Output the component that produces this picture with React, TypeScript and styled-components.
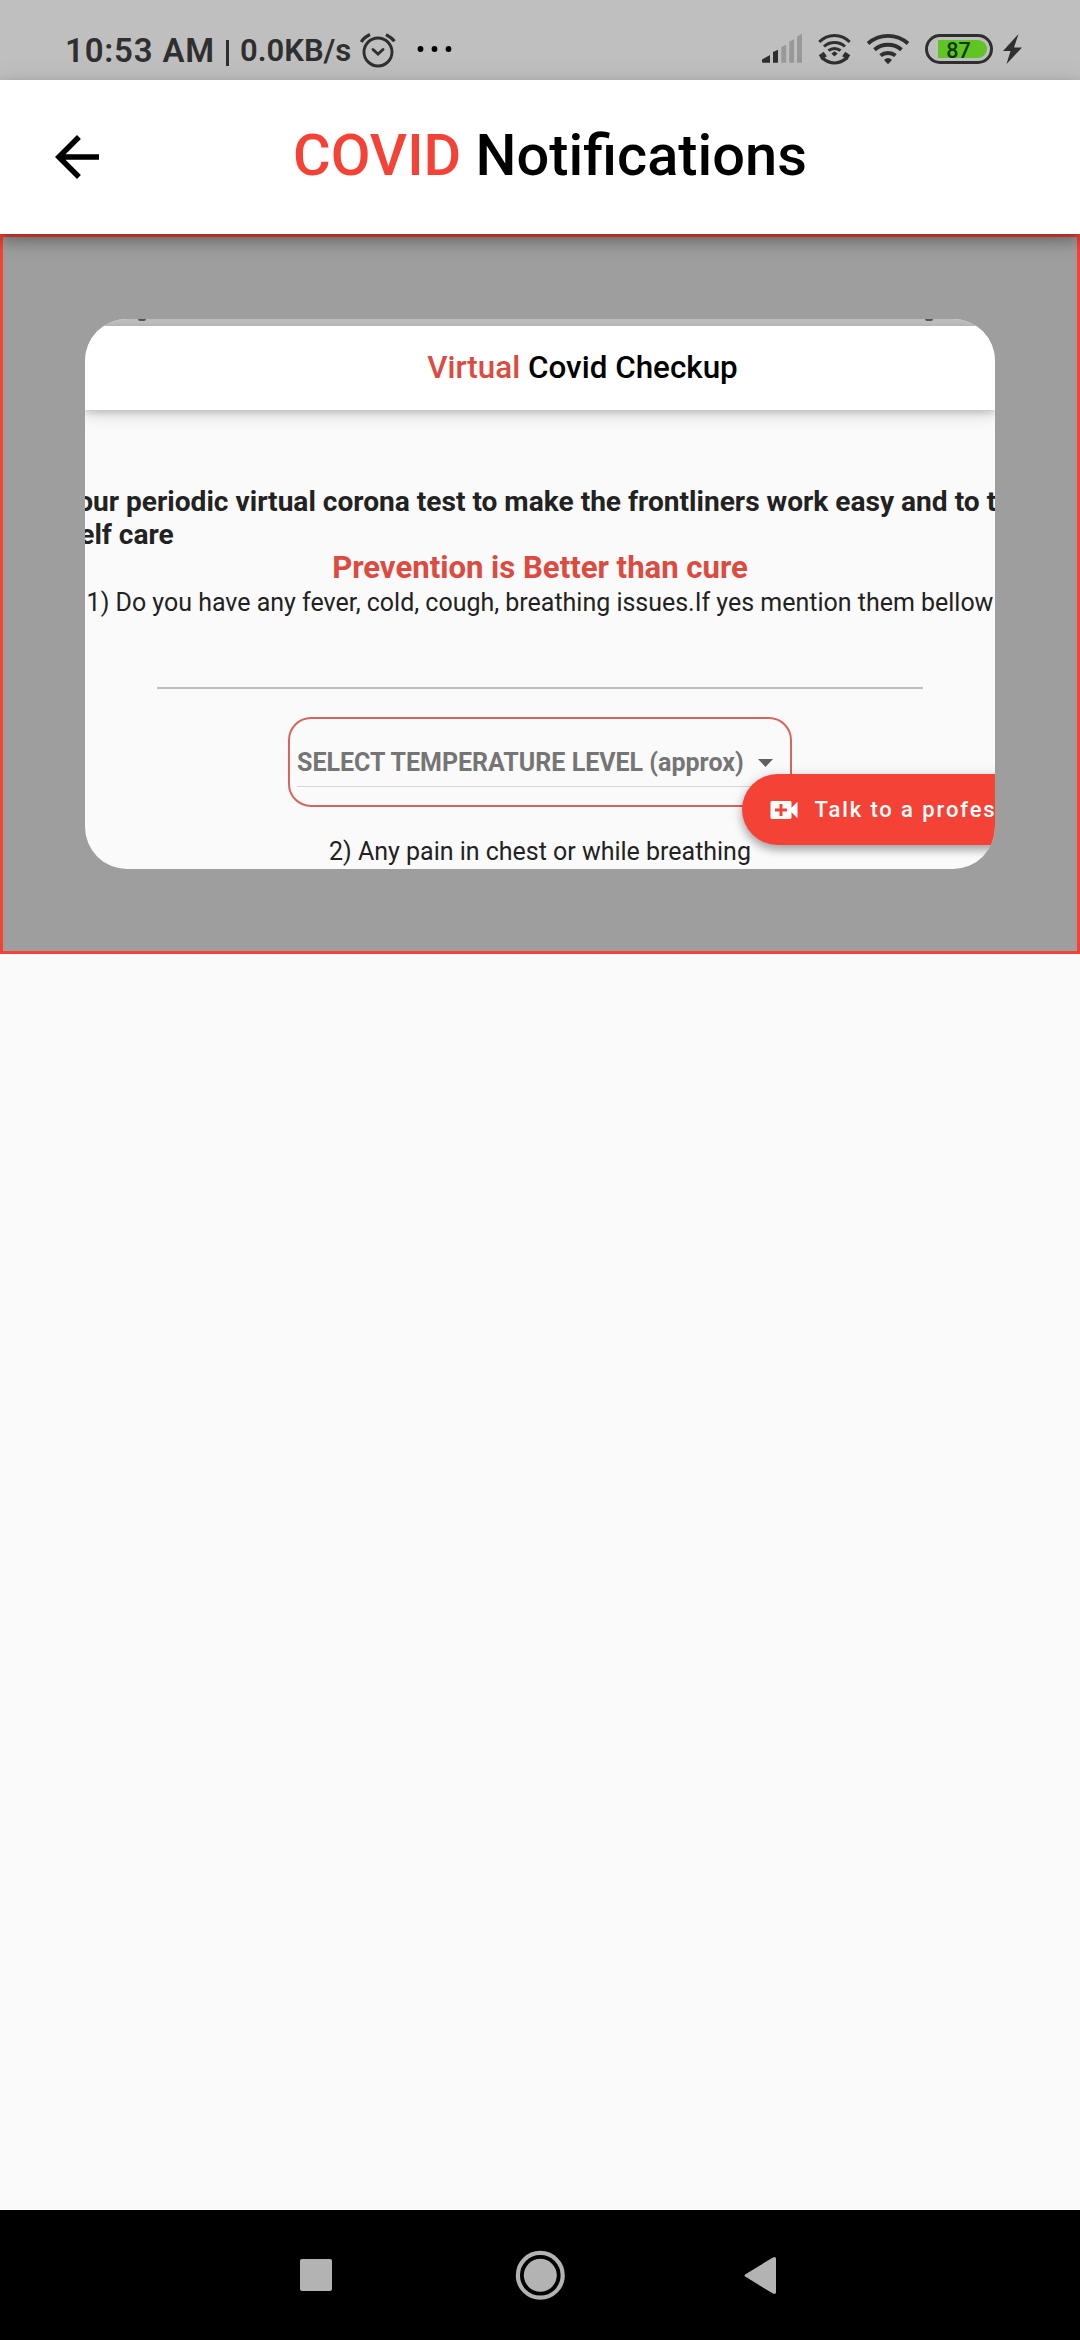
import React from "react";
import styled, { createGlobalStyle } from "styled-components";

const Global = createGlobalStyle`
  * { box-sizing: border-box; }
  html, body { margin: 0; padding: 0; background: #fafafa; }
  body { font-family: Roboto, "Noto Sans", sans-serif; }
`;

const Screen = styled.div`
  width: 1080px;
  height: 2340px;
  display: flex;
  flex-direction: column;
  background: #fafafa;
  overflow: hidden;
`;

const StatusBar = styled.header`
  flex: none;
  height: 80px;
  display: flex;
  align-items: flex-start;
  justify-content: space-between;
  padding: 26px 56px 0 65px;
  background: #bfbfbf;
  color: #2f2f2f;
`;

const StatusGroup = styled.div`
  display: flex;
  height: 46px;
  white-space: nowrap;
`;

const Clock = styled.span`
  width: 161px;
  font-size: 33px;
  line-height: 46px;
  font-weight: 600;
  letter-spacing: 0.8px;
  padding-top: 2px;
`;

const Divider = styled.span`
  width: 3px;
  height: 26px;
  margin: 14px 11px 0 0;
  background: #2f2f2f;
`;

const NetSpeed = styled.span`
  width: 118px;
  font-size: 31px;
  line-height: 46px;
  font-weight: 600;
  padding-top: 2px;
`;

const AppBar = styled.div`
  flex: none;
  position: relative;
  z-index: 1;
  height: 154px;
  display: flex;
  align-items: center;
  padding-left: 44px;
  background: #fff;
  box-shadow: 0 5px 11px rgba(0, 0, 0, 0.2), 0 11px 14px rgba(0, 0, 0, 0.1), 0 3px 27px rgba(0, 0, 0, 0.12);
`;

const Title = styled.h1`
  margin: -5px 0 0 183px;
  font-size: 57.75px;
  line-height: 70px;
  font-weight: 500;
  color: #000;
  white-space: nowrap;
`;

const Accent = styled.span`
  color: #f44336;
`;

const Notice = styled.section`
  flex: none;
  height: 720px;
  border: 3px solid #f44336;
  background: #9e9e9e;
  padding: 82px;
`;

const Card = styled.article`
  position: relative;
  height: 550px;
  border-radius: 42px;
  overflow: hidden;
  background: #fafafa;
  color: #222;
  display: flex;
  flex-direction: column;
  align-items: center;
  white-space: nowrap;
`;

const CardStrip = styled.div`
  flex: none;
  align-self: stretch;
  height: 7px;
  display: flex;
  justify-content: space-between;
  padding: 0 62px 0 53px;
  background: #bfbfbf;
`;

const StripMark = styled.i`
  width: 8px;
  height: 2px;
  border-radius: 0 0 4px 4px;
  background: #555;
`;

const CardHeader = styled.div`
  flex: none;
  align-self: stretch;
  height: 84px;
  text-align: center;
  font-size: 31.4px;
  line-height: 83px;
  font-weight: 500;
  color: #000;
  background: #fff;
  padding-left: 85px;
  box-shadow: 0 3px 6px rgba(0, 0, 0, 0.14), 0 5px 16px rgba(0, 0, 0, 0.14);
`;

const CardAccent = styled.span`
  color: #dc4b40;
`;

const Lead = styled.p`
  align-self: flex-start;
  margin: 75px 0 0 -175.5px;
  font-size: 28.1px;
  line-height: 33.2px;
  font-weight: 700;
`;

const LeadTail = styled.span`
  display: block;
  padding-left: 19px;
`;

const Slogan = styled.p`
  margin: -1px 0 1px;
  font-size: 31.1px;
  line-height: 35px;
  font-weight: 700;
  color: #dc4b40;
`;

const Question = styled.p`
  margin: 1px 0 0;
  font-size: 24.97px;
  line-height: 32px;
`;

const AnswerLine = styled.div`
  flex: none;
  width: 766px;
  height: 2px;
  margin-top: 68px;
  background: #bdbdbd;
`;

const SelectBox = styled.div`
  flex: none;
  width: 504px;
  height: 90px;
  margin: 28px 0 28px;
  padding: 28px 12px 0 7px;
  border: 2px solid #d5655d;
  border-radius: 23px;
`;

const SelectValue = styled.div`
  height: 40px;
  display: flex;
  align-items: center;
  justify-content: space-between;
  padding: 0 5px 8px 0;
  border-bottom: 1px solid #d6d6d6;
  font-size: 25px;
  line-height: 32px;
  font-weight: 700;
  color: #757575;
`;

const CallButton = styled.button`
  position: absolute;
  left: 657px;
  top: 455px;
  width: 360px;
  height: 71px;
  display: flex;
  align-items: center;
  gap: 12.5px;
  padding: 0 0 0 24px;
  border: 0;
  border-radius: 36px;
  background: #f44336;
  color: #fff;
  font: 500 22px/30px Roboto, sans-serif;
  letter-spacing: 1.9px;
  white-space: nowrap;
  box-shadow: 0 5px 9px rgba(0, 0, 0, 0.28), 0 2px 14px rgba(0, 0, 0, 0.12);
`;

const NavBar = styled.nav`
  flex: none;
  height: 130px;
  margin-top: auto;
  background: #000;
`;

const Glyph = styled.svg`
  display: block;
  flex: none;
  overflow: visible;
`;

const AlarmAndDots = () => (
  <Glyph width="100" height="46" viewBox="358 26 100 46" fill="none" stroke="#2f2f2f" strokeWidth="2.9" strokeLinecap="round">
    <circle cx="378" cy="52" r="14" />
    <path d="M373 49.5l5 4.500 5-4.500" />
    <path strokeWidth="3.3" strokeLinecap="butt" d="M361.3 42Q364 37.500 370 34.600M386 34.600Q391.500 37.500 394.400 41.200" />
    <g fill="#000" stroke="none">
      <circle cx="420.5" cy="49" r="2.9" />
      <circle cx="434.5" cy="49" r="2.9" />
      <circle cx="448.5" cy="49" r="2.9" />
    </g>
  </Glyph>
);

const StatusIcons = () => (
  <Glyph width="269" height="46" viewBox="755 26 269 46" fill="none">
    <path fill="#2f2f2f" d="M762 61v-1.500l8-4.500v7.800h-7q-1 0-1-1zM773 62.8V52l5-2.3v13.1z" />
    <path fill="#999" d="M781.3 62.8V47l4.9-2.3v18.1zM789.2 62.8V41.5l4.9-2.3v23.6zM797 62.8V36.4l5-2.6v29z" />
    <g stroke="#2f2f2f" strokeWidth="3">
      <path d="M819.3 42a21 21 0 0 1 30.400 0M824 46.500a15.500 15.500 0 0 1 21 0M828.500 50.700a9 9 0 0 1 12 0" />
      <path d="M821.500 57.500Q834.500 68.500 847.500 57.500" />
      <path strokeWidth="5.500" d="M820.300 57.500l5-3.400M848.700 57.500l-5-3.400" />
    </g>
    <path fill="#2f2f2f" d="M831.300 53.500l3.200-2.300 3.200 2.300-3.200 2.900z" />
    <g stroke="#2f2f2f" strokeWidth="3.9">
      <path d="M868 43.500a30 30 0 0 1 40 0M874.500 49.700a21 21 0 0 1 27 0M880.500 55.600a12 12 0 0 1 15 0" />
    </g>
    <path fill="#2f2f2f" d="M884 60q4-3.800 8 0L888 64.300z" />
    <rect x="926.5" y="35.500" width="65" height="27" rx="13.500" stroke="#2f2f2f" strokeWidth="3" />
    <path fill="#60c424" d="M938 41q0-1 1-1h39a9 9 0 0 1 0 18h-39q-1 0-1-1z" />
    <text
      x="946.200"
      y="57.500"
      fontFamily="Roboto, sans-serif"
      fontSize="22.500"
      fontWeight="500"
      fill="#0f3a08"
      textLength="24.500"
      lengthAdjust="spacingAndGlyphs"
    >
      87
    </text>
    <path fill="#2f2f2f" d="M1018.500 34l-15.500 17h7.500l-4 13L1022 47.500h-8z" />
  </Glyph>
);

export default function App() {
  return (
    <Screen>
      <Global />
      <StatusBar>
        <StatusGroup>
          <Clock>10:53 AM</Clock>
          <Divider />
          <NetSpeed>0.0KB/s</NetSpeed>
          <AlarmAndDots />
        </StatusGroup>
        <StatusIcons />
      </StatusBar>
      <AppBar>
        <Glyph width="66" height="66" viewBox="0 0 24 24">
          <path d="M20 11H7.830l5.590-5.590L12 4l-8 8 8 8 1.410-1.410L7.830 13H20z" />
        </Glyph>
        <Title>
          <Accent>COVID</Accent> Notifications
        </Title>
      </AppBar>
      <Notice>
        <Card>
          <CardStrip>
            <StripMark />
            <StripMark />
          </CardStrip>
          <CardHeader>
            <CardAccent>Virtual</CardAccent> Covid Checkup
          </CardHeader>
          <Lead>
            Please take your periodic virtual corona test to make the frontliners work easy and to take
            <LeadTail>necessary self care</LeadTail>
          </Lead>
          <Slogan>Prevention is Better than cure</Slogan>
          <Question>1) Do you have any fever, cold, cough, breathing issues.If yes mention them bellow</Question>
          <AnswerLine />
          <SelectBox>
            <SelectValue>
              SELECT TEMPERATURE LEVEL (approx)
              <Glyph width="15" height="8" viewBox="0 0 15 8">
                <path fill="#616161" d="M0 0h15L7.500 8z" />
              </Glyph>
            </SelectValue>
          </SelectBox>
          <Question>2) Any pain in chest or while breathing</Question>
          <CallButton>
            <Glyph width="36" height="36" viewBox="0 0 24 24">
              <path
                fill="#fff"
                d="M17 10.500V7c0-.55-.45-1-1-1H4c-.55 0-1 .45-1 1v10c0 .55.45 1 1 1h12c.55 0 1-.45 1-1v-3.500l4 4v-11l-4 4zM14 13h-3v3H9v-3H6v-2h3V8h2v3h3v2z"
              />
            </Glyph>
            Talk to a professional
          </CallButton>
        </Card>
      </Notice>
      <NavBar>
        <Glyph width="1080" height="130" viewBox="0 2210 1080 130" fill="#b3b3b3">
          <rect x="300" y="2259" width="32" height="32" rx="2" />
          <circle cx="540.300" cy="2275.300" r="16.500" />
          <circle cx="540.300" cy="2275.300" r="22.400" fill="none" stroke="#b3b3b3" strokeWidth="4.200" />
          <path d="M745.500 2274.200l27.500-16.800q3-1.500 3 1.600v33q0 3-3 1.600l-27.500-16.800q-2-1.300 0-2.600z" />
        </Glyph>
      </NavBar>
    </Screen>
  );
}
